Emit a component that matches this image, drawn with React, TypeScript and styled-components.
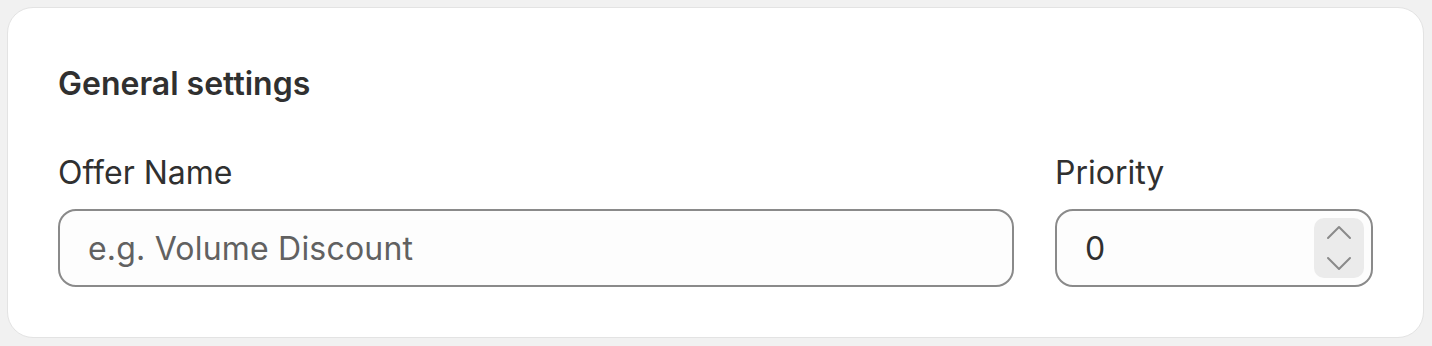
import React from 'react';
import styled, { createGlobalStyle } from 'styled-components';

const GlobalStyle = createGlobalStyle`
  html, body {
    margin: 0;
    padding: 0;
    background: #f1f1f1;
  }
  body {
    font-family: Inter, "Noto Sans", "Liberation Sans", sans-serif;
    color: #303030;
  }
`;

const Page = styled.div`
  padding: 7px 8px 7px 7px;
`;

const Card = styled.section`
  background: #ffffff;
  border: 1px solid #e3e3e3;
  border-radius: 26px;
  padding: 56px 50px 50px 50px;
  display: flex;
  flex-direction: column;
  gap: 49px;
`;

const Heading = styled.h2`
  margin: 0;
  font-size: 32px;
  line-height: 40px;
  font-weight: 600;
  color: #303030;
`;

const Row = styled.div`
  display: grid;
  grid-template-columns: 1fr 318px;
  gap: 41px;
`;

const Field = styled.div`
  display: flex;
  flex-direction: column;
  gap: 16px;
`;

const Label = styled.label`
  font-size: 32px;
  line-height: 40px;
  font-weight: 400;
  color: #303030;
`;

const InputBox = styled.div`
  position: relative;
  height: 78px;
  box-sizing: border-box;
  border: 2px solid #8a8a8a;
  border-radius: 18px;
  background: #fdfdfd;
  display: flex;
  align-items: center;
`;

const TextInput = styled.input<{ $padRight?: number }>`
  flex: 1;
  min-width: 0;
  height: 100%;
  border: none;
  outline: none;
  background: transparent;
  padding: 0 ${p => p.$padRight ?? 28}px 0 28px;
  font-family: inherit;
  font-size: 32px;
  letter-spacing: 0.2px;
  color: #303030;
  &::placeholder {
    color: #616161;
  }
`;

const Spinner = styled.div`
  position: absolute;
  right: 7px;
  top: 7px;
  width: 50px;
  height: 60px;
  border-radius: 10px;
  background: #ebebeb;
  display: flex;
  flex-direction: column;
  align-items: center;
  justify-content: space-between;
  padding: 5px 0;
  box-sizing: border-box;
`;

const Chevron = ({ up }: { up?: boolean }) => (
  <svg width={26} height={20} viewBox="0 0 26 20" fill="none">
    <path
      d={up ? 'M2 15 L13 4 L24 15' : 'M2 5 L13 16 L24 5'}
      stroke="#8a8a8a"
      strokeWidth={2}
      strokeLinecap="round"
      strokeLinejoin="round"
    />
  </svg>
);

export default function App() {
  return (
    <Page>
      <GlobalStyle />
      <Card>
        <Heading>General settings</Heading>
        <Row>
          <Field>
            <Label>Offer Name</Label>
            <InputBox>
              <TextInput placeholder="e.g. Volume Discount" />
            </InputBox>
          </Field>
          <Field>
            <Label>Priority</Label>
            <InputBox>
              <TextInput defaultValue="0" $padRight={70} />
              <Spinner>
                <Chevron up />
                <Chevron />
              </Spinner>
            </InputBox>
          </Field>
        </Row>
      </Card>
    </Page>
  );
}
